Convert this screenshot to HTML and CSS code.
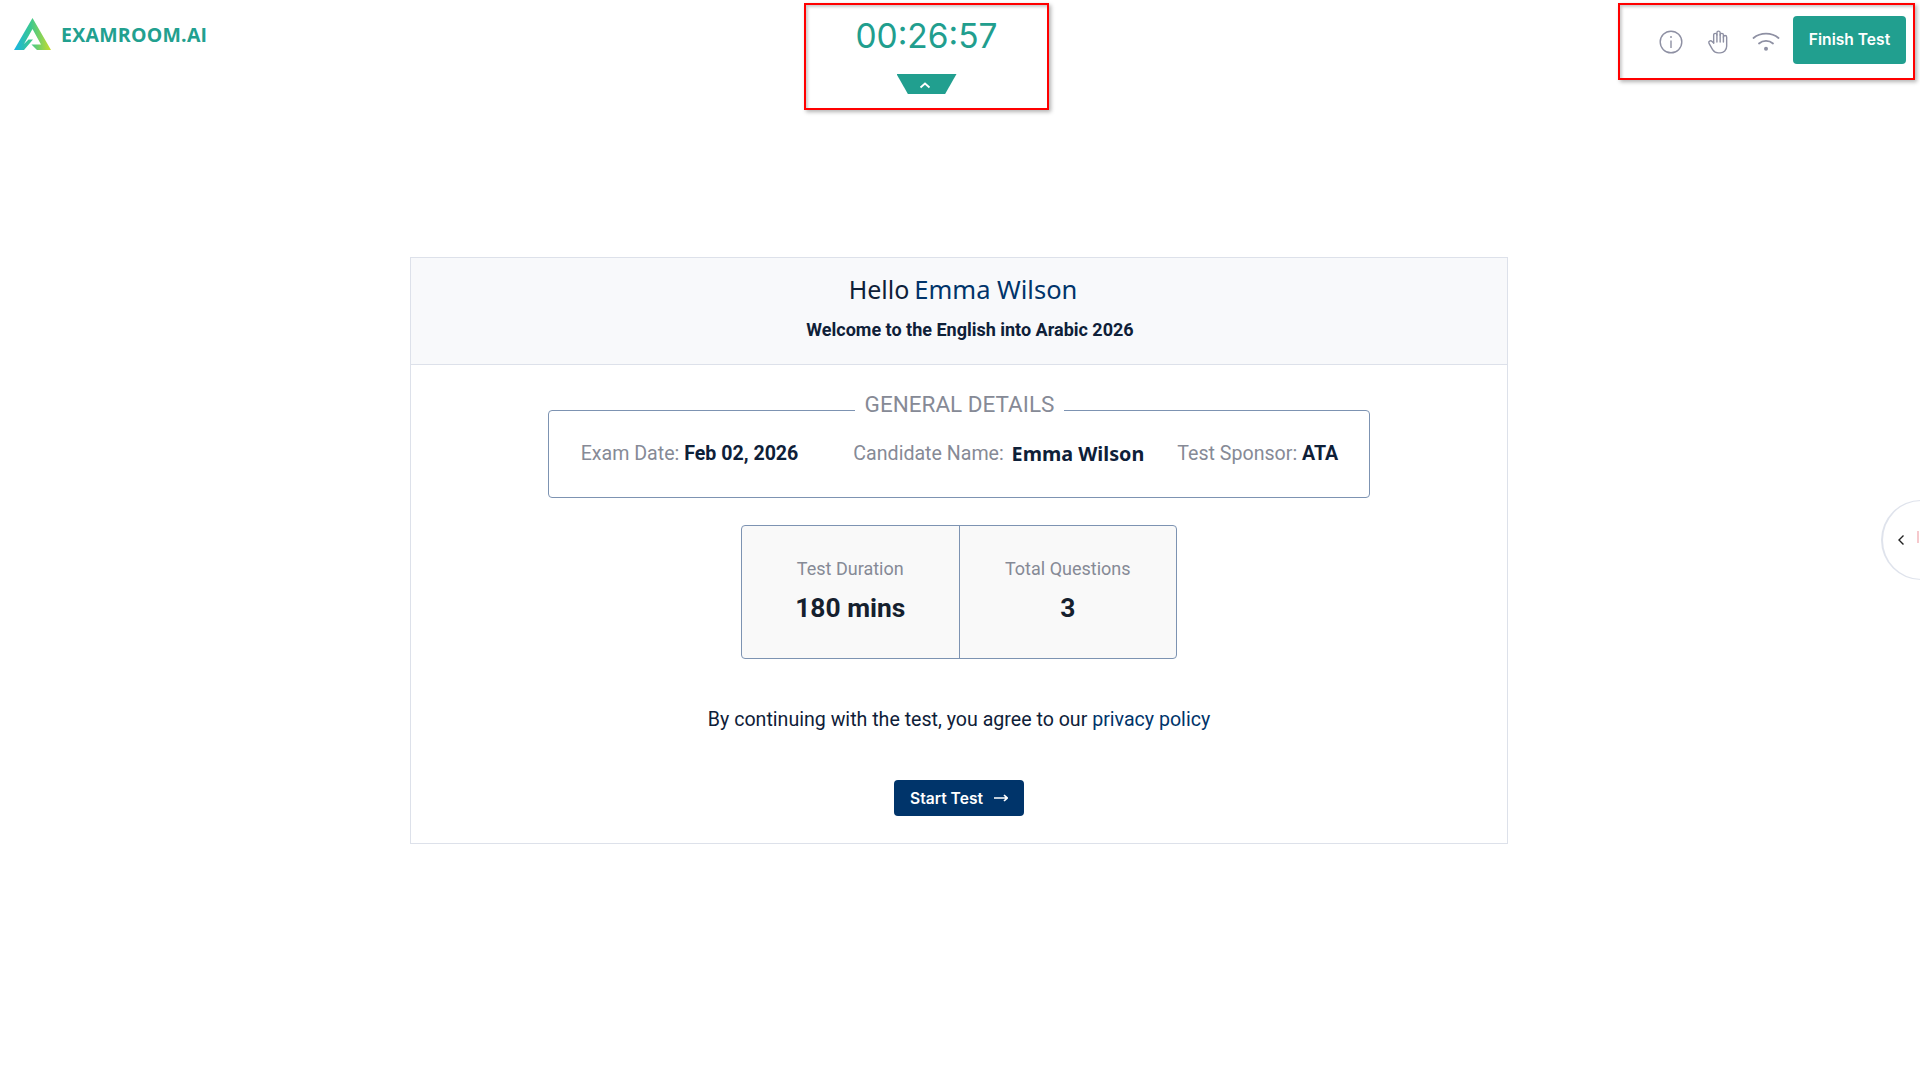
FILE: index.html
```html
<!DOCTYPE html>
<html lang="en">
<head>
    <meta charset="UTF-8">
    <title>ExamRoom.AI</title>
    <link rel="stylesheet" href="styles.css">
</head>
<body>
    <header class="topbar">
        <div class="logo">
            <svg class="logo-mark" width="37" height="32" viewBox="0 0 37 32">
                <defs>
                    <linearGradient id="logoGrad" x1="0" y1="0" x2="1" y2="0">
                        <stop offset="0" stop-color="#17b4e6"/>
                        <stop offset="0.45" stop-color="#3cc88f"/>
                        <stop offset="1" stop-color="#c8dc2a"/>
                    </linearGradient>
                </defs>
                <path d="M18.5 0 L37 32 L23 32 L17.5 26.5 L27 26.5 L18.5 11 L10 26 L14.5 21.5 L19 21.5 L10 32 L0 32 Z" fill="url(#logoGrad)"/>
            </svg>
            <span class="logo-text">EXAMROOM.AI</span>
        </div>
        <div class="timer-box">
            <div class="timer">00:26:57</div>
            <div class="timer-tab">
                <svg width="12" height="8" viewBox="0 0 12 8"><path d="M1.5 6.5 L6 2.5 L10.5 6.5" fill="none" stroke="#fff" stroke-width="1.8"/></svg>
            </div>
        </div>
        <div class="tools-box">
            <div class="tools">
                <svg width="26" height="26" viewBox="0 0 26 26" fill="none" stroke="#8e90a3" stroke-width="1.4">
                    <circle cx="13" cy="13" r="10.8"/>
                    <path d="M13 11.5 V19"/>
                    <path d="M13 7 V9"/>
                </svg>
                <svg width="26" height="26" viewBox="0 0 24 24" fill="none" stroke="#8e90a3" stroke-width="1.3" stroke-linecap="round" stroke-linejoin="round">
                    <path d="M8 13v-7.5a1.5 1.5 0 0 1 3 0v6.5"/>
                    <path d="M11 5.5v-2a1.5 1.5 0 1 1 3 0v8.5"/>
                    <path d="M14 5.5a1.5 1.5 0 0 1 3 0v6.5"/>
                    <path d="M17 7.5a1.5 1.5 0 0 1 3 0v8.5a6 6 0 0 1 -6 6h-2h.208a6 6 0 0 1 -5.012 -2.7a69.74 69.74 0 0 1 -.196 -.3c-.312 -.479 -1.407 -2.388 -3.286 -5.728a1.5 1.5 0 0 1 .536 -2.022a1.867 1.867 0 0 1 2.28 .28l1.47 1.47"/>
                </svg>
                <svg width="28" height="20" viewBox="0 0 28 20" fill="none" stroke="#8e90a3" stroke-width="1.8" stroke-linecap="round">
                    <path d="M1.5 6 C8.5 0.2 19.5 0.2 26.5 6"/>
                    <path d="M7 11.5 C11 8 17 8 21 11.5"/>
                    <circle cx="14" cy="16.8" r="2" fill="#8e90a3" stroke="none"/>
                </svg>
            </div>
            <button class="finish-btn">Finish Test</button>
        </div>
    </header>

    <main class="card">
        <div class="card-head">
            <h1 class="hello">Hello <span class="hello-name">Emma Wilson</span></h1>
            <p class="welcome">Welcome to the English into Arabic 2026</p>
        </div>
        <div class="card-body">
            <fieldset class="details">
                <legend>GENERAL DETAILS</legend>
                <div class="detail-row">
                    <div class="detail exam-date">Exam Date: <b>Feb 02, 2026</b></div>
                    <div class="detail">Candidate Name: <b class="cand-name">Emma Wilson</b></div>
                    <div class="detail">Test Sponsor: <b>ATA</b></div>
                </div>
            </fieldset>
            <div class="stats">
                <div class="stat">
                    <div class="stat-label">Test Duration</div>
                    <div class="stat-value">180 mins</div>
                </div>
                <div class="stat">
                    <div class="stat-label">Total Questions</div>
                    <div class="stat-value">3</div>
                </div>
            </div>
            <p class="agree">By continuing with the test, you agree to our <a href="#">privacy policy</a></p>
            <button class="start-btn">Start Test
                <svg width="14" height="10" viewBox="0 0 14 10"><path d="M0 5 H13 M10 2 L13.2 5 L10 8" fill="none" stroke="#fff" stroke-width="1.7"/></svg>
            </button>
        </div>
    </main>

    <div class="side-tab">
        <svg class="side-chevron" width="8" height="12" viewBox="0 0 8 12"><path d="M6.5 1.5 L2 6 L6.5 10.5" fill="none" stroke="#222" stroke-width="1.4"/></svg>
        <span class="side-mark"></span>
    </div>
</body>
</html>
```
FILE: styles.css
```css
body
{
    margin: 0;
    height: 1077px;
    overflow: hidden;
    background-color: #fff;
    font-family: Roboto, "Liberation Sans", sans-serif;
    color: #0e2038;
}
.topbar
{
    display: grid;
    grid-template-columns: 804px 245px 1fr;
    height: 112px;
    align-items: start;
}
.logo
{
    display: flex;
    align-items: center;
    gap: 10px;
    padding: 18px 0 0 14px;
}
.logo-text
{
    font-family: "Open Sans", sans-serif;
    font-weight: 700;
    font-size: 19.5px;
    letter-spacing: 0.25px;
    color: #22a08f;
}
.timer-box
{
    box-sizing: border-box;
    height: 107px;
    margin-top: 3px;
    border: 2px solid #f00;
    box-shadow: 2px 2px 4px rgba(0, 0, 0, 0.3), inset 2px 2px 3px rgba(0, 0, 0, 0.2);
    text-align: center;
}
.timer
{
    font-family: Inter, sans-serif;
    font-size: 33.5px;
    color: #219e8e;
    margin-top: 10px;
    line-height: 42px;
}
.timer-tab
{
    display: flex;
    justify-content: center;
    box-sizing: border-box;
    width: 60px;
    height: 20px;
    margin: 17px auto 0;
    padding: 7px 4px 0 0;
    background-color: #219f8f;
    clip-path: polygon(0 0, 100% 0, 81% 100%, 19% 100%);
}
.tools-box
{
    box-sizing: border-box;
    justify-self: end;
    display: flex;
    align-items: center;
    gap: 13px;
    width: 297px;
    height: 77px;
    margin: 3px 5px 0 0;
    padding: 0 7px 4px 38px;
    border: 2px solid #f00;
    box-shadow: 2px 2px 4px rgba(0, 0, 0, 0.3), inset 2px 2px 3px rgba(0, 0, 0, 0.2);
}
.tools
{
    display: flex;
    align-items: center;
    gap: 21px;
    margin-top: 4px;
}
.finish-btn
{
    flex-shrink: 0;
    background-color: #219f8f;
    border: none;
    border-radius: 4px;
    color: #fff;
    font-family: Inter, sans-serif;
    font-weight: 600;
    font-size: 15.6px;
    width: 113px;
    height: 48px;
}
.card
{
    width: 1096px;
    margin: 145px 0 0 410px;
    border: 1px solid #dde1ea;
}
.card-head
{
    background-color: #f8f9fb;
    border-bottom: 1px solid #dde1ea;
    text-align: center;
    height: 106px;
}
.hello
{
    margin: 0;
    padding: 13px 0 0 8px;
    font-family: "Noto Sans", sans-serif;
    font-weight: 400;
    font-size: 25px;
    line-height: 36px;
    word-spacing: -1.5px;
}
.hello-name
{
    font-size: 25.5px;
    word-spacing: 0;
    color: #00346a;
}
.welcome
{
    margin: 12px 0 0;
    padding-left: 22px;
    font-weight: 700;
    font-size: 18px;
}
.card-body
{
    display: flex;
    flex-direction: column;
    align-items: center;
    padding-bottom: 27px;
}
.details
{
    box-sizing: border-box;
    width: 820px;
    margin: 26px 0 0;
    padding: 0 31px 0 32px;
    border: 1px solid #7d93b2;
    border-radius: 4px;
}
.details legend
{
    margin: 0 auto;
    padding: 0 10px 12px;
    font-size: 22.5px;
    line-height: 27px;
    color: #868a96;
}
.detail-row
{
    display: flex;
    align-items: center;
    gap: 33px;
    height: 47px;
    padding-bottom: 20px;
}
.exam-date
{
    margin-right: 22px;
}
.detail
{
    font-size: 19.6px;
    color: #868a96;
    white-space: nowrap;
}
.detail b
{
    color: #0e2038;
}
.cand-name
{
    font-family: "Noto Sans", sans-serif;
    margin-left: 3px;
    font-size: 19.8px;
    line-height: 1;
    vertical-align: -1px;
}
.stats
{
    display: flex;
    margin-top: 27px;
    width: 436px;
    height: 134px;
    box-sizing: border-box;
    border: 1px solid #7d93b2;
    border-radius: 4px;
    background-color: #f9f9f9;
}
.stat
{
    flex: 1;
    text-align: center;
    padding-top: 32px;
}
.stat + .stat
{
    border-left: 1px solid #7d93b2;
}
.stat-label
{
    font-size: 18px;
    color: #868a96;
}
.stat-value
{
    margin-top: 14px;
    font-weight: 700;
    font-size: 26.4px;
    color: #15202e;
}
.agree
{
    margin: 49px 0 0;
    font-size: 19.6px;
}
.agree a
{
    color: #00346a;
    text-decoration: none;
}
.start-btn
{
    display: flex;
    align-items: center;
    justify-content: center;
    gap: 11px;
    width: 130px;
    height: 36px;
    margin-top: 49px;
    border: none;
    border-radius: 4px;
    background-color: #00346a;
    color: #fff;
    font-family: Inter, sans-serif;
    font-weight: 600;
    font-size: 15.6px;
}
.side-tab
{
    position: absolute;
    top: 500px;
    left: 1881px;
    width: 80px;
    height: 80px;
    box-sizing: border-box;
    border: 1px solid #dfe3ec;
    border-left-width: 2px;
    border-radius: 40px;
    background-color: #fff;
    padding: 33px 0 0 14px;
}
.side-chevron
{
    display: block;
}
.side-mark
{
    position: absolute;
    top: 30px;
    left: 34px;
    width: 2px;
    height: 12px;
    background-color: #f6c9cd;
}
```
